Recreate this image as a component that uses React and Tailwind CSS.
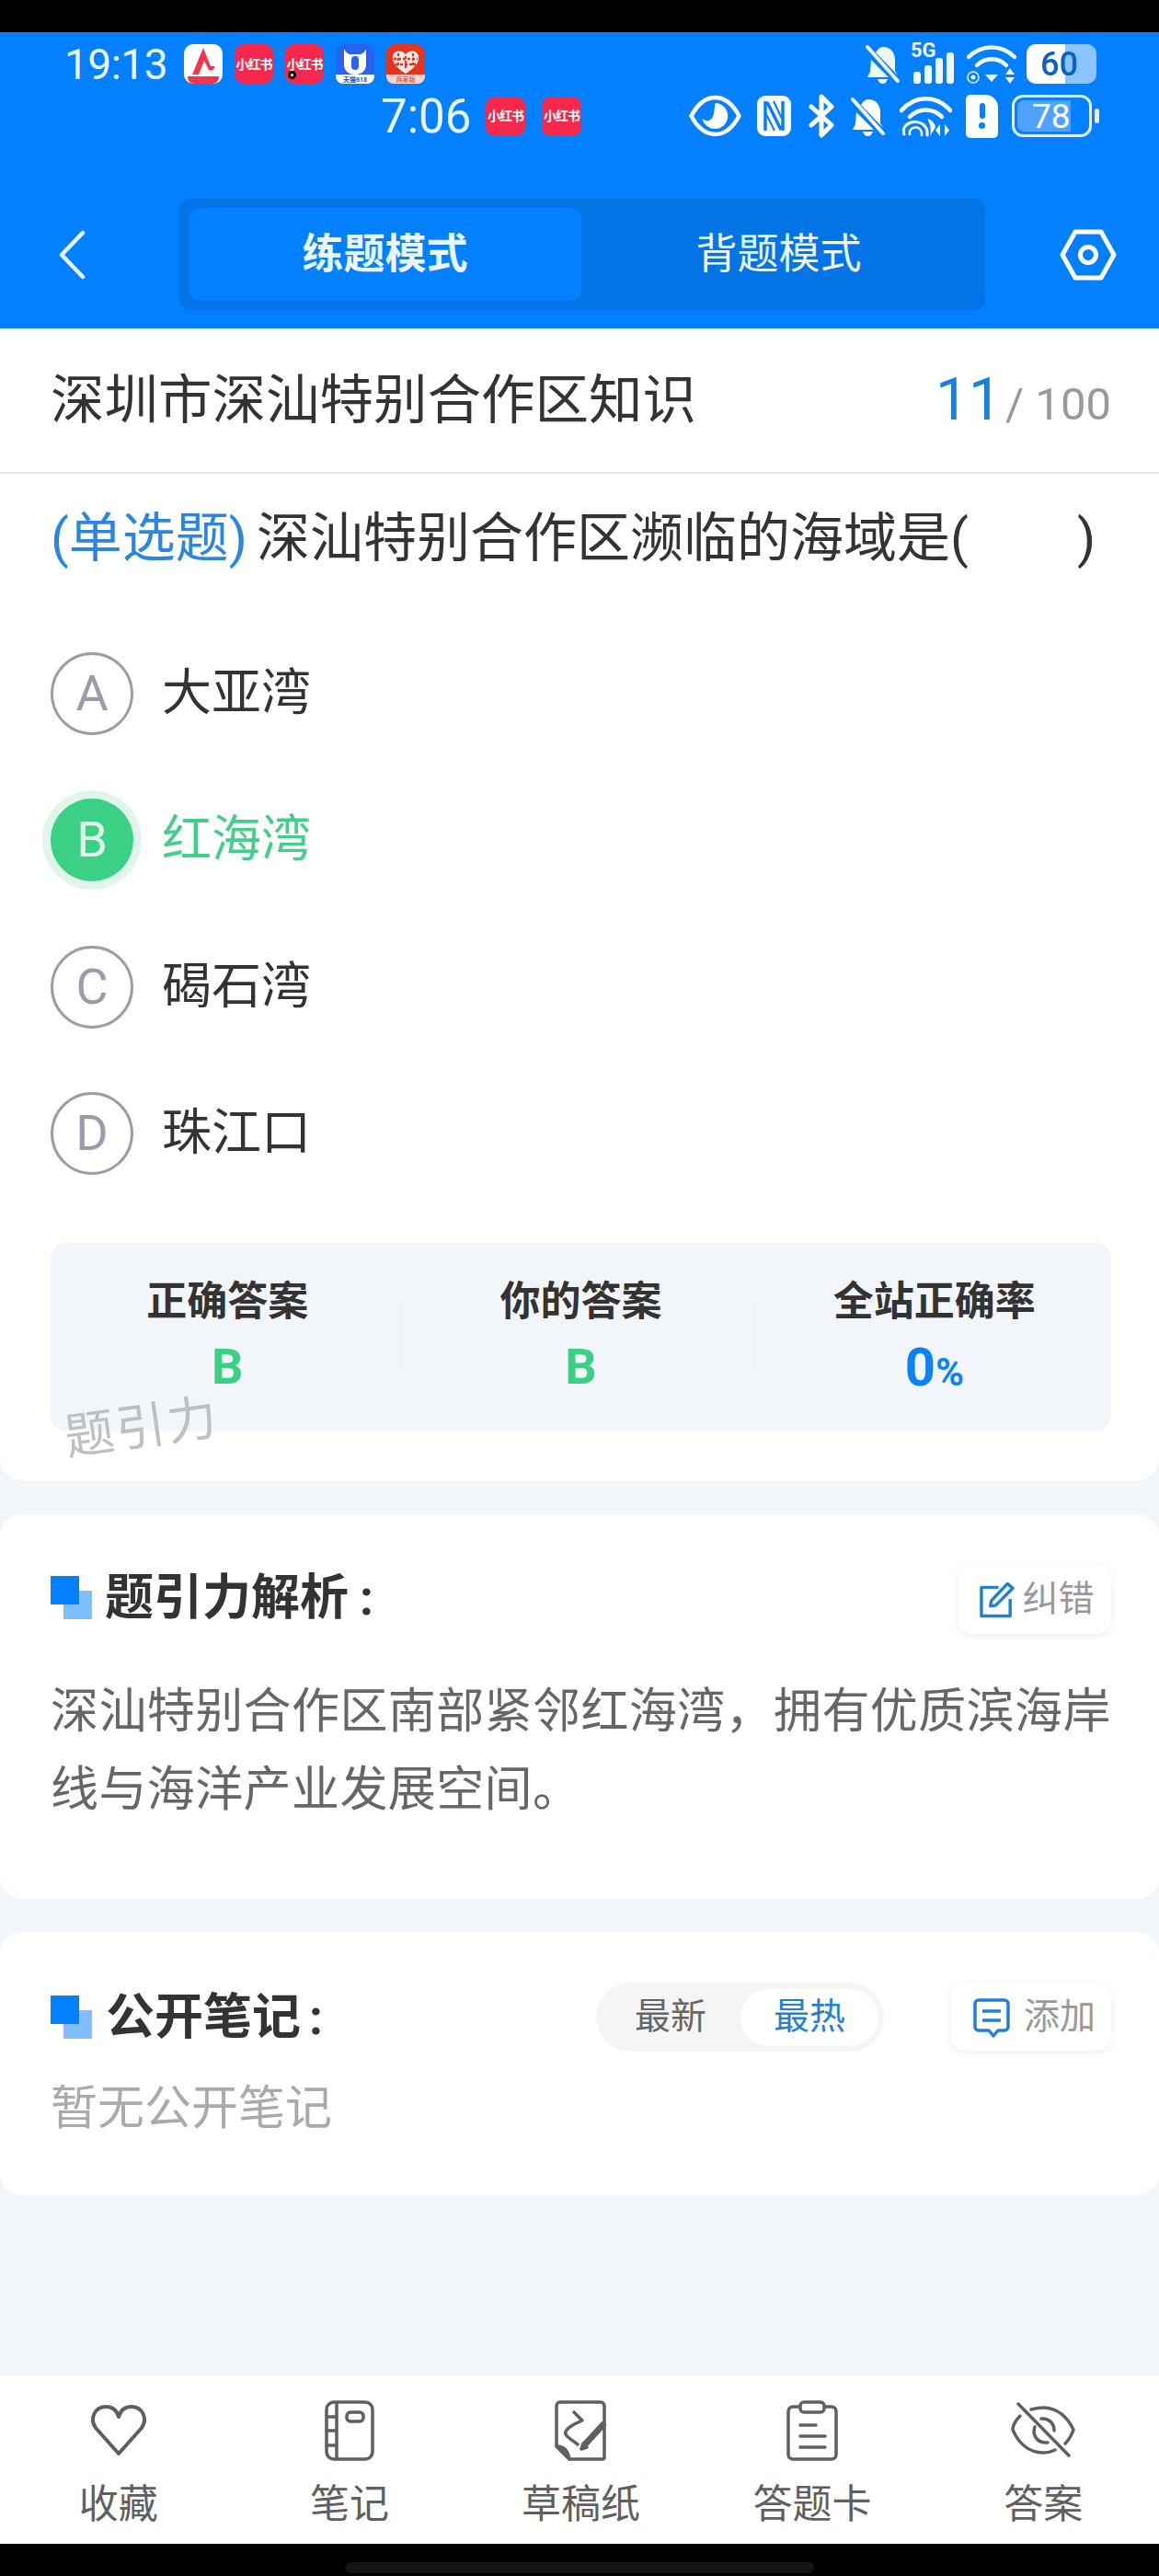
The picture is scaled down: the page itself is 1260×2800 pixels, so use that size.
import React from "react";

const FF = { fontFamily: 'Roboto, "Noto Sans CJK SC", sans-serif' };

function XhsIcon({ dot, cls = "w-[42px] h-[43px]" }) {
  return (
    <div className={`relative ${cls} rounded-[10px] bg-[#f5274a] flex items-center justify-center text-white text-[14px] font-bold leading-none tracking-[-1px] shrink-0`}>
      小红书
      {dot && <span className="absolute left-[3px] bottom-[5px] w-[9px] h-[9px] rounded-full bg-white border-[3px] border-black" />}
    </div>
  );
}

function AppA() {
  return (
    <svg width="42" height="43" viewBox="0 0 42 43" className="shrink-0">
      <rect width="42" height="43" rx="10" fill="#fff" />
      <path d="M4 35h34v1a7 7 0 0 1-7 7H11a7 7 0 0 1-7-7z" fill="#f0364f" />
      <path d="M21 4 L9 33 L16 33 L22 18 L27 28 C30 30 34 27 33 24 L29 24 Z" fill="#f0364f" />
    </svg>
  );
}
function AppT() {
  return (
    <svg width="42" height="43" viewBox="0 0 42 43" className="shrink-0">
      <rect width="42" height="43" rx="10" fill="#2a62ee" />
      <path d="M0 33h42v2a8 8 0 0 1-8 8H8a8 8 0 0 1-8-8z" fill="#fff" />
      <path d="M9 5c1 3 3 5 6 6h12c3-1 5-3 6-6v17c0 7-5 11-12 11S9 29 9 22z" fill="#fff" />
      <rect x="17" y="13" width="8" height="15" rx="4" fill="#2a62ee" />
      <text x="21" y="41" fontSize="7" fontWeight="700" fill="#1d4fc5" textAnchor="middle">天猫618</text>
    </svg>
  );
}
function AppP() {
  return (
    <svg width="42" height="43" viewBox="0 0 42 43" className="shrink-0">
      <rect width="42" height="43" rx="10" fill="#e5341f" />
      <path d="M0 33h42v2a8 8 0 0 1-8 8H8a8 8 0 0 1-8-8z" fill="#fbd5cc" />
      <path d="M21 32C10 25 6 19 7 13c1-6 9-8 14-2 5-6 13-4 14 2 1 6-3 12-14 19z" fill="#fff" opacity=".9" />
      <path d="M13 10v14M21 13v15M29 10v14M8 16h26M10 22h22" stroke="#e5341f" strokeWidth="2.400" strokeDasharray="3 2" />
      <text x="21" y="41" fontSize="7" fill="#c9321d" textAnchor="middle">商家版</text>
    </svg>
  );
}

function BellOff({ w = 39, h = 43, fill = "#eef6ff" }) {
  return (
    <svg width={w} height={h} viewBox="0 0 39 43" className="shrink-0">
      <path d="M20 3c8 0 13 6 13 14v12l3 5-24-25c2-4 5-6 8-6zM7 17l19 19H3l3-6z" fill={fill} />
      <path d="M14 38h11c-1 3-3 5-5.500 5S15 41 14 38z" fill={fill} />
      <path d="M3 3l33 37" stroke={fill} strokeWidth="4" strokeLinecap="round" />
    </svg>
  );
}

function Signal5G() {
  return (
    <div className="relative w-[50px] h-[43px] shrink-0">
      <span className="absolute left-0 top-[-4px] text-[22px] leading-[22px] font-bold text-[#eef6ff]">5G</span>
      <div className="absolute left-[3px] bottom-0 flex items-end gap-[4px]">
        <div className="w-[8px] h-[13px] rounded-[3px] bg-[#eef6ff]" />
        <div className="w-[8px] h-[20px] rounded-[3px] bg-[#eef6ff]" />
        <div className="w-[8px] h-[28px] rounded-[3px] bg-[#eef6ff]" />
        <div className="w-[8px] h-[34px] rounded-[3px] bg-[#eef6ff]" />
      </div>
    </div>
  );
}

function Wifi1() {
  return (
    <svg width="54" height="43" viewBox="0 0 54 43" fill="none" className="shrink-0">
      <path d="M2 14C16 0 38 0 52 14" stroke="#eef6ff" strokeWidth="4.500" strokeLinecap="round" />
      <path d="M11 23c9-9 23-9 32 0" stroke="#eef6ff" strokeWidth="4.500" strokeLinecap="round" />
      <path d="M20 33h14l-7 8z" fill="#eef6ff" />
      <circle cx="7" cy="36" r="2.500" fill="#eef6ff" />
      <circle cx="7" cy="36" r="6" stroke="#eef6ff" strokeWidth="1.500" />
      <path d="M47 26l5 7H42zM47 43l5-7H42z" fill="#eef6ff" />
    </svg>
  );
}

function Wifi2() {
  return (
    <svg width="57" height="48" viewBox="0 0 57 48" fill="none" className="shrink-0">
      <path d="M2 18C17 1 40 1 55 18" stroke="#fff" strokeWidth="4.500" strokeLinecap="round" />
      <path d="M11 25c10-10 25-10 35 0" stroke="#fff" strokeWidth="4.500" strokeLinecap="round" />
      <path d="M5 44c-5-14 20-20 25-4v5" stroke="#fff" strokeWidth="3" strokeLinecap="round" />
      <path d="M11 44c-2-8 11-11 13-2v3" stroke="#fff" strokeWidth="2.500" strokeLinecap="round" />
      <path d="M30 27c5 1 8 5 9 9l-6 10c2-7 0-14-3-19z" fill="#fff" />
      <path d="M44 33v13l-5-6.500zM49 33v13l5-6.500z" fill="#fff" />
    </svg>
  );
}

function Eye() {
  return (
    <svg width="57" height="46" viewBox="0 0 57 46" fill="none" className="shrink-0">
      <path d="M2.500 23C10 9 19 3 28.500 3S47 9 54.500 23C47 37 38 43 28.500 43S10 37 2.500 23z" stroke="#fff" strokeWidth="4.500" />
      <path d="M28.500 9a14 14 0 1 1-14 17c4 3 7 3 10 0s3-10 4-17z" fill="#fff" />
    </svg>
  );
}

function Nfc() {
  return (
    <svg width="41" height="48" viewBox="0 0 41 48" fill="none" className="shrink-0">
      <rect x="2" y="2" width="37" height="44" rx="9" fill="#fff" />
      <path d="M11 8v32M30 8v32M13 9l15 30" stroke="#0380ff" strokeWidth="3.500" />
      <path d="M20 8l9 19M12 22l9 18" stroke="#0380ff" strokeWidth="2" />
    </svg>
  );
}

function Bt() {
  return (
    <svg width="32" height="48" viewBox="0 0 32 48" fill="none" className="shrink-0">
      <path d="M5 14l22 20-11 11V3l11 11L5 34" stroke="#fff" strokeWidth="5" strokeLinejoin="round" strokeLinecap="round" />
    </svg>
  );
}

function Sim() {
  return (
    <div className="relative w-[35px] h-[47px] bg-white rounded-[5px] rounded-tr-[14px] flex flex-col items-center justify-center gap-[4px] shrink-0">
      <div className="w-[6px] h-[17px] rounded-[3px] bg-[#0380ff]" />
      <div className="w-[7px] h-[7px] rounded-full bg-[#0380ff]" />
    </div>
  );
}

function Back() {
  return (
    <svg width="30" height="54" viewBox="0 0 30 54" fill="none" className="shrink-0">
      <path d="M27 3L4 27l23 24" stroke="#eaf5ff" strokeWidth="4.500" strokeLinecap="round" strokeLinejoin="round" />
    </svg>
  );
}

function Gear() {
  return (
    <svg width="62" height="58" viewBox="0 0 62 58" fill="none" className="shrink-0">
      <path d="M17 4h28l14 25-14 25H17L3 29z" stroke="#fff" strokeWidth="5" strokeLinejoin="round" />
      <circle cx="31" cy="29" r="8.500" stroke="#fff" strokeWidth="5" />
    </svg>
  );
}

function Option({ letter, text, active }) {
  return (
    <div className="h-[159.500px] flex items-center">
      {active ? (
        <div className="w-[90px] h-[90px] rounded-full bg-[#3ad185] ring-[9px] ring-[#e1f6eb] flex items-center justify-center text-[#dff7ea] text-[54px] font-normal leading-none">
          {letter}
        </div>
      ) : (
        <div className="w-[90px] h-[90px] rounded-full border-[3px] border-[#9b9bab] flex items-center justify-center text-[#9b9bab] text-[54px] font-normal leading-none">
          {letter}
        </div>
      )}
      <div className={`ml-[31px] text-[54px] leading-none ${active ? "text-[#42cf8a]" : "text-[#333333]"}`}>{text}</div>
    </div>
  );
}

function HeadMark() {
  return (
    <div className="relative w-[45px] h-[47px] shrink-0">
      <div className="absolute right-0 bottom-0 w-[31px] h-[31px] bg-[#80bfff]" />
      <div className="absolute left-0 top-0 w-[31px] h-[31px] bg-[#0380ff]" />
    </div>
  );
}

function Heart() {
  return (
    <svg width="66" height="66" viewBox="0 0 66 66" fill="none">
      <path d="M33 58L8 30C1 20 7 7 19 7c7 0 12 4 14 11 2-7 7-11 14-11 12 0 18 13 11 23z" stroke="#5f5f5f" strokeWidth="4" strokeLinejoin="round" />
    </svg>
  );
}
function Notebook() {
  return (
    <svg width="54" height="66" viewBox="0 0 54 66" fill="none" stroke="#5f5f5f" strokeWidth="3.500">
      <rect x="2" y="2" width="50" height="62" rx="8" />
      <path d="M13 2v62M2 18h11M2 33h11M2 49h11" />
      <rect x="24" y="13" width="18" height="10" rx="4" />
    </svg>
  );
}
function Draft() {
  return (
    <svg width="62" height="66" viewBox="0 0 62 66" fill="none" stroke="#5f5f5f" strokeWidth="3.500" strokeLinejoin="round">
      <path d="M8 2h44a4 4 0 0 1 4 4v56a2 2 0 0 1-2 2H18L4 50V6a4 4 0 0 1 4-4z" />
      <path d="M4 50c6 0 12 2 14 14z" fill="#5f5f5f" />
      <path d="M22 12l10 10c-10 4-20 10-18 15 2 4 10 8 14 12" />
      <path d="M34 49l22-24" strokeWidth="7" />
      <path d="M31 53l2-6 4 4z" fill="#5f5f5f" />
    </svg>
  );
}
function Clipboard() {
  return (
    <svg width="56" height="66" viewBox="0 0 56 66" fill="none" stroke="#5f5f5f" strokeWidth="3.500" strokeLinecap="round">
      <path d="M14 7H8a5 5 0 0 0-6 5v47a5 5 0 0 0 5 5h42a5 5 0 0 0 5-5V12a5 5 0 0 0-5-5h-7" />
      <rect x="15" y="2" width="26" height="11" rx="4" />
      <path d="M15 27h17M15 39h27M15 51h27" />
    </svg>
  );
}
function EyeOff() {
  return (
    <svg width="70" height="62" viewBox="0 0 70 62" fill="none" stroke="#5f5f5f" strokeWidth="3.500" strokeLinecap="round">
      <path d="M10 15C4 21 2 25 2 30c6 14 17 25 33 25 5 0 9-1 13-3M22 8c4-1 8-2 13-2 16 0 27 11 33 24-2 6-5 11-9 15" />
      <path d="M26 27c-3 8 2 18 14 17M33 18c8-1 14 5 14 13" />
      <path d="M8 2l55 56" />
    </svg>
  );
}

function BottomTab({ icon, label }) {
  return (
    <div className="flex-1 flex flex-col items-center">
      <div className="h-[66px] flex items-center justify-center">{icon}</div>
      <div className="mt-[22px] text-[43px] leading-[50px] text-[#5f5f5f]">{label}</div>
    </div>
  );
}

function Stat({ title, children, divider }) {
  return (
    <div className="relative flex-1 flex flex-col items-center">
      <div className="text-[44px] leading-[50px] font-bold text-[#333333]">{title}</div>
      <div className="mt-[21px] h-[50px] leading-[50px] text-[54px] font-bold flex items-baseline">{children}</div>
      {divider && <div className="absolute right-[3px] top-[25px] w-px h-[70px] bg-[#e9edf1]" />}
    </div>
  );
}

export default function App() {
  return (
    <div className="w-[1260px] h-[2800px] flex flex-col bg-[#f2f5f9] overflow-hidden" style={FF}>
      <div className="h-[35px] bg-black shrink-0" />
      <div className="h-[322px] bg-[#0380ff] shrink-0 flex flex-col">
        <div className="h-[57px] pl-[70px] pr-[68px] pt-[12px] flex items-center">
          <div className="text-[46px] leading-none text-[#eaf7ff] tracking-[-0.500px] w-[130px]">19:13</div>
          <div className="flex gap-[13px]">
            <AppA />
            <XhsIcon />
            <XhsIcon dot />
            <AppT />
            <AppP />
          </div>
          <div className="ml-auto flex items-center gap-[11px]">
            <BellOff />
            <Signal5G />
            <Wifi1 />
            <div className="relative w-[76px] h-[43px] rounded-[10px] bg-[#8cc4ff] overflow-hidden flex items-center">
              <div className="absolute left-0 top-0 h-full w-[42px] bg-white" />
              <span className="relative pl-[15px] text-[36px] leading-none text-[#0a62c0] font-medium">60</span>
            </div>
          </div>
        </div>
        <div className="h-[48px] mt-[10px] pl-[414px] pr-[65px] flex items-center">
          <div className="text-[51px] leading-none text-[#eaf7ff] w-[114px]">7:06</div>
          <div className="flex gap-[18px]">
            <XhsIcon cls="w-[43px] h-[43px]" />
            <XhsIcon cls="w-[43px] h-[43px]" />
          </div>
          <div className="ml-auto flex items-center gap-[15px]">
            <Eye />
            <Nfc />
            <Bt />
            <BellOff fill="#ffffff" />
            <Wifi2 />
            <Sim />
            <div className="flex items-center">
              <div className="relative w-[87px] h-[46px] rounded-[12px] border-[3px] border-[#dcefff] overflow-hidden flex items-center">
                <div className="absolute left-[3px] top-[3px] bottom-[3px] w-[58px] rounded-l-[7px] bg-[#4da3ff]" />
                <span className="relative pl-[19px] text-[37px] leading-none text-white">78</span>
              </div>
              <div className="ml-[3px] w-[5px] h-[16px] rounded-full bg-[#dcefff]" />
            </div>
          </div>
        </div>
        <div className="mt-[66px] pl-[63px] pr-[46px] flex items-center">
          <Back />
          <div className="ml-[102px] w-[876px] h-[121px] rounded-[12px] bg-[#0274e6] p-[10px] flex">
            <div className="w-[427px] rounded-[12px] bg-[#0380ff] flex items-center justify-center text-[45px] font-bold text-[#eaf7ff] leading-none">练题模式</div>
            <div className="flex-1 flex items-center justify-center text-[45px] text-[#eaf7ff] leading-none">背题模式</div>
          </div>
          <div className="ml-auto"><Gear /></div>
        </div>
      </div>

      <div className="flex-1 flex flex-col">
        <div className="relative h-[1252px] bg-white rounded-b-[24px] shrink-0">
          <div className="h-[158px] border-b-[2px] border-[#e8e8e8] pl-[55px] pr-[52px] flex items-center justify-between">
            <div className="text-[58.500px] leading-none text-[#333333]">深圳市深汕特别合作区知识</div>
            <div className="flex items-baseline">
              <span className="text-[64px] leading-none text-[#1a80dc]">11</span>
              <span className="ml-[4px] text-[49px] leading-none text-[#999999]">/ 100</span>
            </div>
          </div>
          <div className="pl-[55px] pr-[52px] pt-[50px] h-[90px] flex items-center text-[58px] leading-none text-[#333333]">
            <span className="text-[#2a86de] mr-[10px]">(单选题)</span>
            <span>深汕特别合作区濒临的海域是(</span>
            <span className="ml-[118px]">)</span>
          </div>
          <div className="px-[55px] mt-[69px]">
            <Option letter="A" text="大亚湾" />
            <Option letter="B" text="红海湾" active />
            <Option letter="C" text="碣石湾" />
            <Option letter="D" text="珠江口" />
          </div>
          <div className="ml-[55px] mr-[52px] mt-[39px] h-[204px] rounded-[16px] bg-[#f2f5f9] flex pt-[39px]">
            <Stat title="正确答案" divider><span className="text-[#3ad185]">B</span></Stat>
            <Stat title="你的答案" divider><span className="text-[#3ad185]">B</span></Stat>
            <Stat title="全站正确率">
              <span className="text-[#0a84f5] text-[58px]">0</span>
              <span className="text-[#0a84f5] text-[42px]">%</span>
            </Stat>
          </div>
          <div className="absolute left-[70px] bottom-[30px] text-[54px] leading-none tracking-[2px] text-[#bdbfc2] -rotate-[8deg]">题引力</div>
        </div>

        <div className="mt-[37px] h-[418px] bg-white rounded-[24px] pl-[55px] pr-[52px] pt-[55px] shrink-0">
          <div className="flex items-start">
            <div className="mt-[12px]"><HeadMark /></div>
            <div className="ml-[14px] mt-[6px] text-[53px] leading-[60px] font-bold text-[#333333]">题引力解析<span className="ml-[12px]">:</span></div>
            <div className="ml-auto w-[167px] h-[75px] rounded-[16px] bg-white shadow-[0_2px_8px_rgba(0,0,0,0.08)] flex items-center justify-center gap-[6px] pl-[5px]">
              <svg width="41" height="42" viewBox="0 0 42 42" fill="none" stroke="#1f80d8" strokeWidth="3.500">
                <path d="M22 7H3v32h32V20" strokeLinejoin="round" />
                <path d="M14 22L32 3l6 5-19 19-6 1z" strokeLinejoin="round" />
              </svg>
              <span className="text-[39px] leading-none text-[#999999]">纠错</span>
            </div>
          </div>
          <div className="mt-[42px] text-[52px] leading-[85px] tracking-[0.400px] text-[#666666]">
            深汕特别合作区南部紧邻红海湾，拥有优质滨海岸线与海洋产业发展空间。
          </div>
        </div>

        <div className="mt-[36px] h-[286px] bg-white rounded-[24px] pl-[55px] pr-[52px] pt-[55px] shrink-0">
          <div className="flex items-center h-[75px]">
            <HeadMark />
            <div className="ml-[15px] text-[53px] leading-[60px] font-bold text-[#333333]">公开笔记<span className="ml-[9px]">:</span></div>
            <div className="ml-auto w-[313px] h-[75px] rounded-full bg-[#f5f5f5] flex items-center pl-[42px] pr-[6px]">
              <span className="text-[39px] leading-none text-[#666666]">最新</span>
              <div className="ml-auto w-[150px] h-[62px] rounded-full bg-white flex items-center justify-center text-[39px] leading-none text-[#1f80d8]">最热</div>
            </div>
            <div className="ml-[72px] w-[175px] h-[73px] rounded-[16px] bg-white shadow-[0_2px_8px_rgba(0,0,0,0.08)] flex items-center justify-center gap-[13px] pl-[6px]">
              <svg width="44" height="44" viewBox="0 0 42 44" fill="none" stroke="#1f80d8" strokeWidth="3.500">
                <path d="M7 3h28a4 4 0 0 1 4 4v25a4 4 0 0 1-4 4H28l-5 6-5-6H7a4 4 0 0 1-4-4V7a4 4 0 0 1 4-4z" strokeLinejoin="round" />
                <path d="M11 15h20M11 25h20" />
              </svg>
              <span className="text-[39px] leading-none text-[#999999]">添加</span>
            </div>
          </div>
          <div className="mt-[32px] text-[51px] leading-[60px] text-[#aaaaaa]">暂无公开笔记</div>
        </div>

        <div className="flex-1" />

        <div className="h-[182px] bg-white flex pt-[26px] pl-[3px] shrink-0">
          <BottomTab icon={<Heart />} label="收藏" />
          <BottomTab icon={<Notebook />} label="笔记" />
          <BottomTab icon={<Draft />} label="草稿纸" />
          <BottomTab icon={<Clipboard />} label="答题卡" />
          <BottomTab icon={<EyeOff />} label="答案" />
        </div>
        <div className="h-[35px] bg-black shrink-0 flex justify-center pt-[20px]">
          <div className="w-[510px] h-[12px] rounded-full bg-[#141414]" />
        </div>
      </div>
    </div>
  );
}
